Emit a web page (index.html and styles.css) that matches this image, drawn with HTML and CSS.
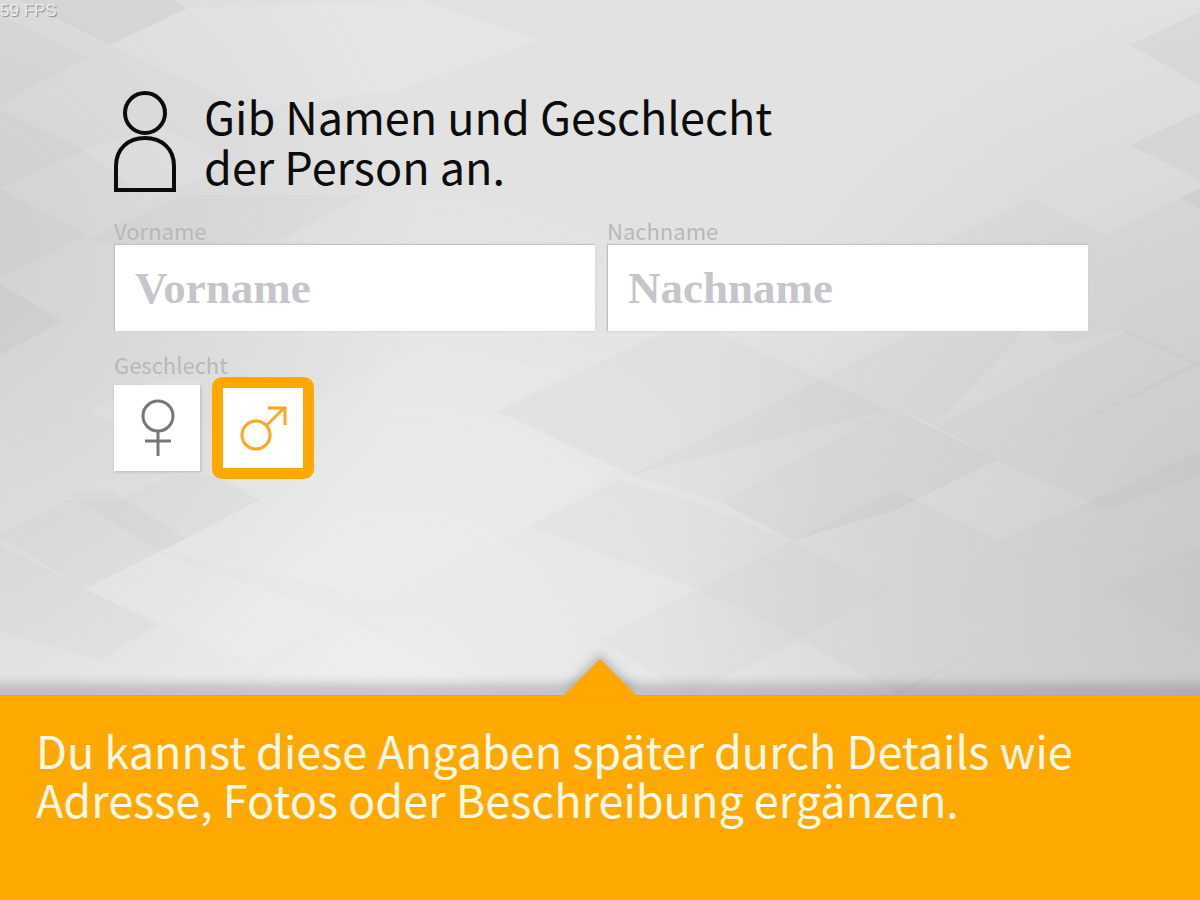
FILE: index.html
```
<!DOCTYPE html>
<html lang="de">

    <head>
        <meta charset="UTF-8">
        <meta name="viewport" content="width=device-width, initial-scale=1.0">
        <title>Person anlegen</title>
        <link rel="stylesheet" href="styles.css">
    </head>

    <body>
        <div class="screen">
            <!-- faceted backdrop -->
            <svg class="backdrop" viewBox="0 0 1200 900" preserveAspectRatio="xMidYMid slice" aria-hidden="true">
                <defs>
                    <radialGradient id="glow" gradientUnits="userSpaceOnUse" cx="400" cy="700" r="520">
                        <stop offset="0" stop-color="#ececec" />
                        <stop offset="1" stop-color="#ececec" stop-opacity="0" />
                    </radialGradient>
                    <radialGradient id="shadeRight" gradientUnits="userSpaceOnUse" cx="1300" cy="600" r="640">
                        <stop offset="0" stop-color="#cacaca" />
                        <stop offset="1" stop-color="#cacaca" stop-opacity="0" />
                    </radialGradient>
                    <radialGradient id="shadeLeft" gradientUnits="userSpaceOnUse" cx="-60" cy="260" r="480">
                        <stop offset="0" stop-color="#d1d1d1" />
                        <stop offset="1" stop-color="#d1d1d1" stop-opacity="0" />
                    </radialGradient>
                </defs>
                <rect width="1200" height="900" fill="#e2e2e2" />
                <rect width="1200" height="900" fill="url(#glow)" />
                <rect width="1200" height="900" fill="url(#shadeRight)" />
                <rect width="1200" height="900" fill="url(#shadeLeft)" />
                <g class="facet-dark">
                    <path class="deep" d="M0 -10L20 0L110 45L188 8L172 0Z" />
                    <path d="M0 15L88 57L0 105Z" />
                    <path d="M0 110L85 150L0 188Z" />
                    <path d="M0 188L88 235L0 278Z" />
                    <path class="deep" d="M0 284L63 321L0 355Z" />
                    <path d="M88 240L180 195L365 195L240 262Z" />
                    <path d="M120 500L170 475H220L260 500L160 552L60 500Z" />
                    <path d="M70 495L110 490L186 538L160 552Z" />
                    <path d="M0 536L60 502L160 552L84 589Z" />
                    <path d="M0 545L84 589L0 632Z" />
                    <path d="M84 589L160 624L100 660L0 632Z" />
                    <path d="M498 411L690 320L890 410L630 475Z" />
                    <path d="M530 526L620 480L697 503L792 541L697 589Z" />
                    <path d="M630 475L828 375L892 408L720 502Z" />
                    <path d="M828 375L930 325L1030 325L935 425L892 408Z" />
                    <path class="deep" d="M720 502L892 408L998 460L895 510L792 541Z" />
                    <path d="M935 425L1130 330L1200 365L1000 462Z" />
                    <path d="M1000 462L1200 360V475L1105 510Z" />
                    <path class="deep" d="M697 589L792 541L890 590L800 640Z" />
                    <path d="M792 541L895 490L1000 540L890 590Z" />
                    <path d="M890 590L1000 540L1100 590L1000 640Z" />
                    <path d="M1000 540L1105 495L1200 450V545L1100 590Z" />
                    <path class="deep" d="M1100 590L1200 545V640Z" />
                    <path d="M600 640L697 589L800 640L690 695Z" />
                    <path d="M800 640L890 590L1000 640L900 695Z" />
                    <path d="M1000 640L1100 590L1200 640V695H890Z" />
                    <path class="deep" d="M1130 45L1200 12V85Z" />
                    <path class="deep" d="M1130 145L1200 112V180Z" />
                    <path class="deep" d="M1180 198L1200 188V209Z" />
                    <path d="M935 245L1030 198L1105 235L1200 188V368L1120 330L1060 345Z" />
                </g>
                <g class="facet-light">
                    <path d="M88 412L150 380H200V430H125Z" />
                    <path d="M314 400L430 340L568 371L498 411L620 470L530 526L380 600L160 552L260 500L220 480L314 440Z" />
                    <path d="M84 589L160 552L300 600L345 618L250 665L160 624Z" />
                    <path d="M235 695L345 618L500 695Z" />
                    <path d="M110 45L188 8L420 0L540 40L400 90L250 110Z" />
                    <path d="M85 150L160 125L230 165L150 200Z" />
                </g>
            </svg>

            <main class="content">
                <p class="fps">59 FPS</p>
                <header class="heading">
                    <svg class="person" viewBox="0 0 64 102" aria-hidden="true">
                        <circle cx="31" cy="22" r="20" />
                        <path d="M2 99V75C2 58 14 47 31 47S60 58 60 75V99Z" />
                    </svg>
                    <h1>Gib Namen und Geschlecht<br>der Person an.</h1>
                </header>

                <form class="person-form">
                    <div class="names">
                        <div class="field">
                            <label for="vorname">Vorname</label>
                            <input type="text" id="vorname" placeholder="Vorname">
                        </div>
                        <div class="field">
                            <label for="nachname">Nachname</label>
                            <input type="text" id="nachname" placeholder="Nachname">
                        </div>
                    </div>
                    <fieldset>
                        <legend>Geschlecht</legend>
                        <div class="options">
                            <label class="tile">
                                <input type="radio" name="geschlecht" value="w" aria-label="weiblich">
                                <svg viewBox="0 0 86 86" aria-hidden="true">
                                    <circle cx="44" cy="31" r="15" />
                                    <path d="M44 46V71M31 56H57" />
                                </svg>
                            </label>
                            <label class="tile">
                                <input type="radio" name="geschlecht" value="m" aria-label="männlich" checked>
                                <svg viewBox="0 0 86 86" aria-hidden="true">
                                    <circle cx="36" cy="50" r="14" />
                                    <path d="M47 40L65 22M48 23H65V40" />
                                </svg>
                            </label>
                        </div>
                    </fieldset>
                </form>
            </main>

            <footer class="hint">
                <svg class="pointer" viewBox="0 0 74 38" aria-hidden="true">
                    <path d="M0 38L37 1L74 38Z" />
                </svg>
                <p>Du kannst diese Angaben später durch Details wie Adresse, Fotos oder Beschreibung ergänzen.</p>
            </footer>
        </div>
    </body>

</html>
```
FILE: styles.css
```
* {
    box-sizing: border-box;
}

body {
    margin: 0;
    font-family: "Noto Sans CJK SC", "Noto Sans", sans-serif;
    color: #0c0c0c;
}

.screen {
    position: relative;
    display: flex;
    flex-direction: column;
    min-height: 100vh;
    overflow: hidden;
}

.backdrop {
    position: absolute;
    inset: 0;
    width: 100%;
    height: 100%;
}

.facet-dark {
    fill: #000;
    fill-opacity: 0.014;
}

.facet-dark .deep {
    fill-opacity: 0.026;
}

.facet-light {
    fill: #fff;
    fill-opacity: 0.1;
}

.content {
    position: relative;
    flex: 1;
    padding: 0 112px 0 114px;
}

.fps {
    position: absolute;
    top: 0;
    left: 0;
    margin: 0;
    font: 17px/22px "Liberation Sans", sans-serif;
    color: #eee;
    text-shadow: 1px 1px 1px #888;
}

.heading {
    display: flex;
    gap: 26px;
    padding-top: 91px;
}

.person {
    width: 64px;
    height: 102px;
    fill: none;
    stroke: #0c0c0c;
    stroke-width: 4;
}

h1 {
    margin: 0;
    font-size: 45px;
    font-weight: 400;
    line-height: 50px;
}

.person-form {
    margin-top: 23px;
}

.names {
    display: flex;
    gap: 12px;
}

.field {
    flex: 1;
    display: flex;
    flex-direction: column;
}

.field label,
legend {
    padding: 0;
    font-size: 22px;
    line-height: 28px;
    color: #b8b8ba;
}

.field input {
    width: 100%;
    height: 87px;
    padding: 0 20px;
    border: 0;
    border-top: 1px solid #c6c6c6;
    border-left: 1px solid #bdbdbd;
    background: #fff;
    box-shadow: 0 0 2px #ccc;
    font: bold 45px "Liberation Serif", serif;
    color: #55555a;
}

.field input::placeholder {
    color: #c5c5ca;
    opacity: 1;
}

fieldset {
    min-width: 0;
    margin: 19px 0 0;
    padding: 0;
    border: 0;
}

.options {
    display: flex;
    gap: 20px;
    padding-top: 7px;
}

.tile {
    position: relative;
    width: 86px;
    height: 86px;
    background: #fff;
    box-shadow: 1px 1px 3px #bbb;
    color: #777;
    cursor: pointer;
}

.tile input {
    position: absolute;
    inset: 0;
    width: 100%;
    height: 100%;
    margin: 0;
    appearance: none;
}

.tile svg {
    display: block;
    fill: none;
    stroke: currentColor;
    stroke-width: 3;
}

.tile:has(input:checked) {
    color: #ffa61c;
}

.tile:has(input:checked)::after {
    content: "";
    position: absolute;
    inset: -8px;
    border: 11px solid #ffa800;
    border-radius: 10px;
}

.hint {
    position: relative;
    min-height: 205px;
    padding: 29px 100px 32px 36px;
    background: #ffa800;
    border-top: 1px solid #ff981c;
    box-shadow: 0 -4px 8px 8px rgba(90, 92, 100, 0.26);
    color: #fff8e8;
}

.hint p {
    margin: 0;
    font-size: 45px;
    line-height: 49px;
}

.pointer {
    position: absolute;
    bottom: 100%;
    left: 50%;
    width: 74px;
    height: 38px;
    margin-left: -37px;
    fill: #ffa800;
    filter: drop-shadow(0 -6px 4px rgba(90, 92, 100, 0.3));
}
```
